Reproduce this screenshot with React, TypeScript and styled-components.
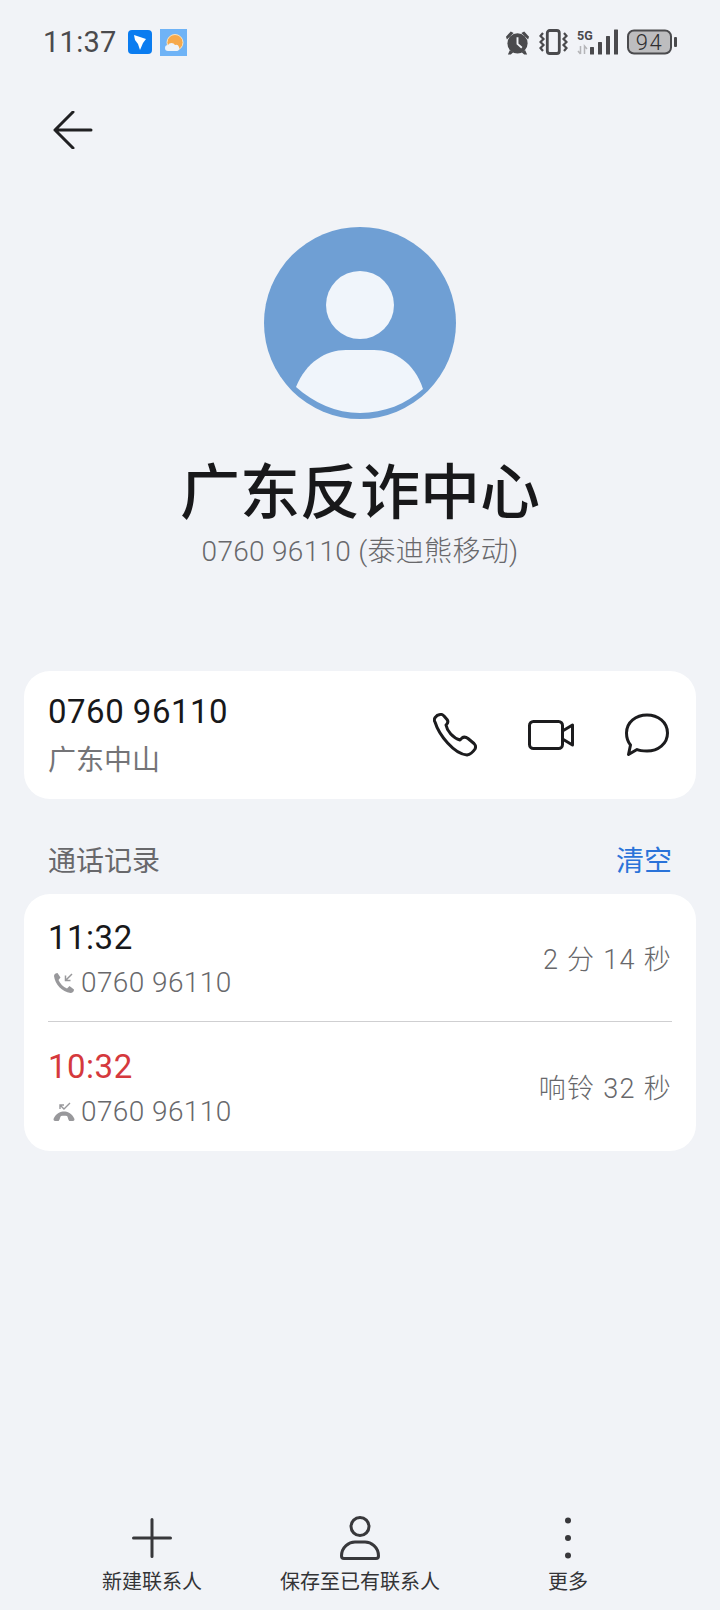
import React from 'react';
import styled, { createGlobalStyle } from 'styled-components';

const GlobalStyle = createGlobalStyle`
  html, body { margin: 0; padding: 0; background: #f1f3f7; }
  body { font-family: Roboto, "Noto Sans CJK SC", sans-serif; }
`;

const Page = styled.div`
  width: 720px;
  height: 1610px;
  display: flex;
  flex-direction: column;
  background: #f1f3f7;
  overflow: hidden;
`;

const StatusBar = styled.div`
  height: 84px;
  padding: 0 43px 0 43px;
  box-sizing: border-box;
  display: flex;
  align-items: center;
  justify-content: space-between;
`;

const StatusGroup = styled.div`
  display: flex;
  align-items: center;
  gap: ${(p: { $gap: number }) => p.$gap}px;
`;

const Clock = styled.span`
  font-size: 29px;
  letter-spacing: 0.3px;
  color: #4a4a4d;
  margin-right: 3px;
`;

const Header = styled.div`
  height: 92px;
  padding-left: 53px;
  display: flex;
  align-items: center;
`;

const Profile = styled.div`
  display: flex;
  flex-direction: column;
  align-items: center;
  padding-top: 51px;
`;

const Name = styled.h1`
  margin: 28px 0 0;
  font-size: 60px;
  line-height: 94px;
  font-weight: 500;
  color: #18181a;
`;

const SubTitle = styled.div`
  font-size: 28px;
  line-height: 36px;
  letter-spacing: 0.3px;
  font-weight: 300;
  color: #68686b;
  margin-top: -7px;
`;

const Card = styled.div`
  margin: 0 24px;
  background: #fff;
  border-radius: 26px;
  padding: 0 24px;
`;

const NumberCard = styled(Card)`
  margin-top: 101px;
  height: 128px;
  padding-right: 27px;
  display: flex;
  align-items: center;
  justify-content: space-between;
`;

const Stack = styled.div`
  display: flex;
  flex-direction: column;
`;

const CallText = styled(Stack)`
  padding-top: 4px;
`;

const Primary = styled.div<{ $missed?: boolean }>`
  font-size: 33px;
  line-height: 42px;
  letter-spacing: 0.5px;
  color: ${(p) => (p.$missed ? '#d5393d' : '#18181a')};
`;

const Region = styled.div`
  font-size: 28px;
  line-height: 38px;
  color: #747477;
  margin-top: 9px;
`;

const Actions = styled.div`
  display: flex;
  align-items: center;
  gap: 51px;
`;

const SectionHead = styled.div`
  height: 95px;
  padding-top: 24px;
  box-sizing: border-box;
  margin: 0 48px;
  display: flex;
  align-items: center;
  justify-content: space-between;
`;

const SectionTitle = styled.span`
  font-size: 28px;
  color: #68686b;
`;

const ClearLink = styled.span`
  font-size: 28px;
  color: #2a73d9;
`;

const CallRow = styled.div<{ $divided?: boolean }>`
  height: ${(p) => (p.$divided ? 128 : 129)}px;
  box-sizing: border-box;
  display: flex;
  align-items: center;
  justify-content: space-between;
  border-bottom: ${(p) => (p.$divided ? '1px solid #cfcfd1' : 'none')};
`;

const Detail = styled.div`
  display: flex;
  align-items: center;
  gap: 6px;
  padding-left: 5px;
  font-size: 28px;
  line-height: 38px;
  letter-spacing: 0.4px;
  font-weight: 300;
  color: #68686b;
  margin-top: 5px;
`;

const Duration = styled.span`
  font-size: 27px;
  letter-spacing: 1.3px;
  font-weight: 300;
  color: #68686b;
`;

const Spacer = styled.div`
  flex: 1;
`;

const BottomBar = styled.div`
  height: 95px;
  display: flex;
  justify-content: center;
`;

const BarItem = styled.div`
  width: 208px;
  display: flex;
  flex-direction: column;
  align-items: center;
`;

const BarIcon = styled.div`
  height: 45px;
  display: flex;
  align-items: center;
  justify-content: center;
`;

const BarLabel = styled.span`
  font-size: 20px;
  line-height: 28px;
  margin-top: 8px;
  color: #333336;
  white-space: nowrap;
`;

const BackIcon = () => (
  <svg width="40" height="38" viewBox="0 0 40 38" fill="none" stroke="#202022" strokeWidth="3" strokeLinecap="round" strokeLinejoin="round">
    <path d="M20 1 L2 19 L20 37 M2 19 H38" />
  </svg>
);

const TenantIcon = () => (
  <svg width="24" height="24" viewBox="0 0 24 24">
    <rect width="24" height="24" rx="4" fill="#0a7cf0" />
    <path d="M6 5 L18 9 L15 13 L12 20 L10 14 L7 10 Z" fill="#fff" />
  </svg>
);

const WeatherIcon = () => (
  <svg width="27" height="27" viewBox="0 0 27 27">
    <rect width="27" height="27" fill="#6fb3f6" />
    <circle cx="15" cy="13.5" r="8" fill="#f6a94b" stroke="#fbe5c0" strokeWidth="1" />
    <path d="M8 22 a3 3 0 0 1 0 -6 a4 4 0 0 1 7 0 a3 3 0 0 1 2 6 Z" fill="#eef3f8" />
  </svg>
);

const AlarmIcon = () => (
  <svg width="25" height="25" viewBox="0 0 26 26" fill="#4a4a4d">
    <circle cx="13" cy="14" r="10.5" />
    <path d="M1 7 L6 1.5 L9 3 L2 10 Z M25 7 L20 1.5 L17 3 L24 10 Z M5 21 L3 25.5 H6 L9 23 Z M21 21 L23 25.5 H20 L17 23 Z" />
    <path d="M13 7.5 V14.5 L17.5 18.5" stroke="#f1f3f7" strokeWidth="2" fill="none" />
  </svg>
);

const VibrateIcon = () => (
  <svg width="29" height="26" viewBox="0 0 29 26" fill="none" stroke="#4a4a4d" strokeWidth="2.2">
    <rect x="8.3" y="1.5" width="12" height="23" rx="2.5" strokeWidth="2.8" />
    <path d="M4 4 L1.5 7 L4.5 10 L1.5 13 L4.5 16 L1.5 19 L4 22" />
    <path d="M25 4 L27.5 7 L24.5 10 L27.5 13 L24.5 16 L27.5 19 L25 22" />
  </svg>
);

const SignalIcon = () => (
  <svg width="41" height="26" viewBox="0 0 41 26">
    <text x="0" y="11" fontSize="12.5" fontWeight="700" fontFamily="Roboto, sans-serif" fill="#4a4a4d">5G</text>
    <path d="M3.5 17 v8 M1 22 l2.5 3 M7.5 25 v-8 l2.5 3" stroke="#b5b5b8" strokeWidth="1.5" fill="none" />
    <g fill="#4a4a4d">
      <rect x="13" y="18" width="4" height="7.5" rx="0.5" />
      <rect x="21" y="13" width="4" height="12.5" rx="0.5" />
      <rect x="29" y="7" width="4" height="18.5" rx="0.5" />
      <rect x="37" y="0.5" width="4" height="25" rx="0.5" />
    </g>
  </svg>
);

const BatteryIcon = () => (
  <svg width="50" height="26" viewBox="0 0 50 26">
    <rect x="1" y="1.5" width="43" height="23" rx="6" fill="#bdbdbf" stroke="#4a4a4d" strokeWidth="2" />
    <rect x="47" y="8" width="3" height="10" rx="1" fill="#4a4a4d" />
    <text x="22.5" y="20.5" textAnchor="middle" fontSize="22" fontWeight="300" letterSpacing="1.5" fontFamily="Roboto, sans-serif" fill="#2e2e30">94</text>
  </svg>
);

const PhoneLine = () => (
  <svg width="44" height="44" viewBox="0 0 44 44" fill="none" stroke="#1c1c1e" strokeWidth="3" strokeLinejoin="round">
    <path d="M2 9 C0 6 3 2 7 1.5 C8.5 1 9.5 1.5 11 3 L14 6.5 C15.5 8.5 15 10 13.5 11.5 L13 12 C14 18 20 25 27 27 L29 25 C31 23.5 33 24 35 25.5 L41 30.5 C42.5 32 43 34 42 36 C40 39 37 41.5 34 42 C21 41 6 22 2 9 Z" />
  </svg>
);

const VideoLine = () => (
  <svg width="46" height="30" viewBox="0 0 46 30" fill="none" stroke="#1c1c1e" strokeWidth="3" strokeLinejoin="round">
    <rect x="1.5" y="1.5" width="33" height="27" rx="4" />
    <path d="M34.5 11 L44.5 5 V25 L34.5 19" />
  </svg>
);

const ChatLine = () => (
  <svg width="44" height="44" viewBox="0 0 44 44" fill="none" stroke="#1c1c1e" strokeWidth="3" strokeLinejoin="round">
    <path d="M22 2 C33 2 42.5 9 42.5 20 C42.5 31 33 38 22 38 C18.5 38 15 38 12 36.5 L3.5 41.5 L5.5 32 C3 29 1.5 25 1.5 20 C1.5 9 11 2 22 2 Z" />
  </svg>
);

const IncomingIcon = () => (
  <svg width="22" height="22" viewBox="0 0 22 22">
    <path d="M1 4 C1 2 3 1 4.5 1 L7.5 5.5 L5.5 8 C7 11.5 10 15 14 16.5 L16.5 14 L21 17.5 C21 19.5 19.5 21 17.5 21 C9 20 2 12 1 4 Z" fill="#98989b" />
    <path d="M19 2 L12.5 8.5 M12.5 3.5 V8.5 H17.5" fill="none" stroke="#98989b" strokeWidth="1.5" />
  </svg>
);

const MissedIcon = () => (
  <svg width="22" height="22" viewBox="0 0 22 22">
    <path d="M0.5 18 C3 12 8 10.5 11 10.5 C14 10.5 19 12 21.5 18 C21.5 19 21 20 20 20 H16.5 C15.5 20 15 16 14 15 C12 14.5 10 14.5 8 15 C7 16 6.5 20 5.5 20 H2 C1 20 0.5 19 0.5 18 Z" fill="#98989b" />
    <path d="M17 2 L11 8 L7 4 M7 8 V4 H11" fill="none" stroke="#98989b" strokeWidth="1.4" />
  </svg>
);

const PlusIcon = () => (
  <svg width="40" height="40" viewBox="0 0 40 40" stroke="#38383b" strokeWidth="3" strokeLinecap="round">
    <path d="M20 1.5 V38.5 M1.5 20 H38.5" />
  </svg>
);

const PersonIcon = () => (
  <svg width="40" height="44" viewBox="0 0 40 44" fill="none" stroke="#38383b" strokeWidth="3" strokeLinejoin="round">
    <circle cx="20" cy="10.5" r="9" />
    <path d="M4 42.5 C2 42.5 1.5 41 1.5 40 C1.5 31 9 26 15 26 H25 C31 26 38.5 31 38.5 40 C38.5 41 38 42.5 36 42.5 Z" />
  </svg>
);

const MoreIcon = () => (
  <svg width="8" height="42" viewBox="0 0 8 42" fill="#38383b">
    <circle cx="4" cy="3.5" r="3" />
    <circle cx="4" cy="21" r="3" />
    <circle cx="4" cy="38.5" r="3" />
  </svg>
);

const Avatar = () => (
  <svg width="192" height="192" viewBox="0 0 192 192">
    <circle cx="96" cy="96" r="96" fill="#6f9fd4" />
    <circle cx="96" cy="78" r="34" fill="#f0f5fb" />
    <path d="M32 160 C42 135 62 123 82 123 H110 C130 123 150 135 159 162 C142 177 120 186 96 186 C72 186 50 176 32 160 Z" fill="#f0f5fb" />
  </svg>
);

const calls = [
  { time: '11:32', duration: '2 分 14 秒', missed: false },
  { time: '10:32', duration: '响铃 32 秒', missed: true },
];

export default function App() {
  return (
    <Page>
      <GlobalStyle />
      <StatusBar>
        <StatusGroup $gap={8}>
          <Clock>11:37</Clock>
          <TenantIcon />
          <WeatherIcon />
        </StatusGroup>
        <StatusGroup $gap={9}>
          <AlarmIcon />
          <VibrateIcon />
          <SignalIcon />
          <BatteryIcon />
        </StatusGroup>
      </StatusBar>
      <Header>
        <BackIcon />
      </Header>
      <Profile>
        <Avatar />
        <Name>广东反诈中心</Name>
        <SubTitle>0760 96110 (泰迪熊移动)</SubTitle>
      </Profile>
      <NumberCard>
        <Stack>
          <Primary>0760 96110</Primary>
          <Region>广东中山</Region>
        </Stack>
        <Actions>
          <PhoneLine />
          <VideoLine />
          <ChatLine />
        </Actions>
      </NumberCard>
      <SectionHead>
        <SectionTitle>通话记录</SectionTitle>
        <ClearLink>清空</ClearLink>
      </SectionHead>
      <Card>
        {calls.map((call, i) => (
          <CallRow key={call.time} $divided={i === 0}>
            <CallText>
              <Primary $missed={call.missed}>{call.time}</Primary>
              <Detail>
                {call.missed ? <MissedIcon /> : <IncomingIcon />}
                0760 96110
              </Detail>
            </CallText>
            <Duration>{call.duration}</Duration>
          </CallRow>
        ))}
      </Card>
      <Spacer />
      <BottomBar>
        <BarItem>
          <BarIcon><PlusIcon /></BarIcon>
          <BarLabel>新建联系人</BarLabel>
        </BarItem>
        <BarItem>
          <BarIcon><PersonIcon /></BarIcon>
          <BarLabel>保存至已有联系人</BarLabel>
        </BarItem>
        <BarItem>
          <BarIcon><MoreIcon /></BarIcon>
          <BarLabel>更多</BarLabel>
        </BarItem>
      </BottomBar>
    </Page>
  );
}
